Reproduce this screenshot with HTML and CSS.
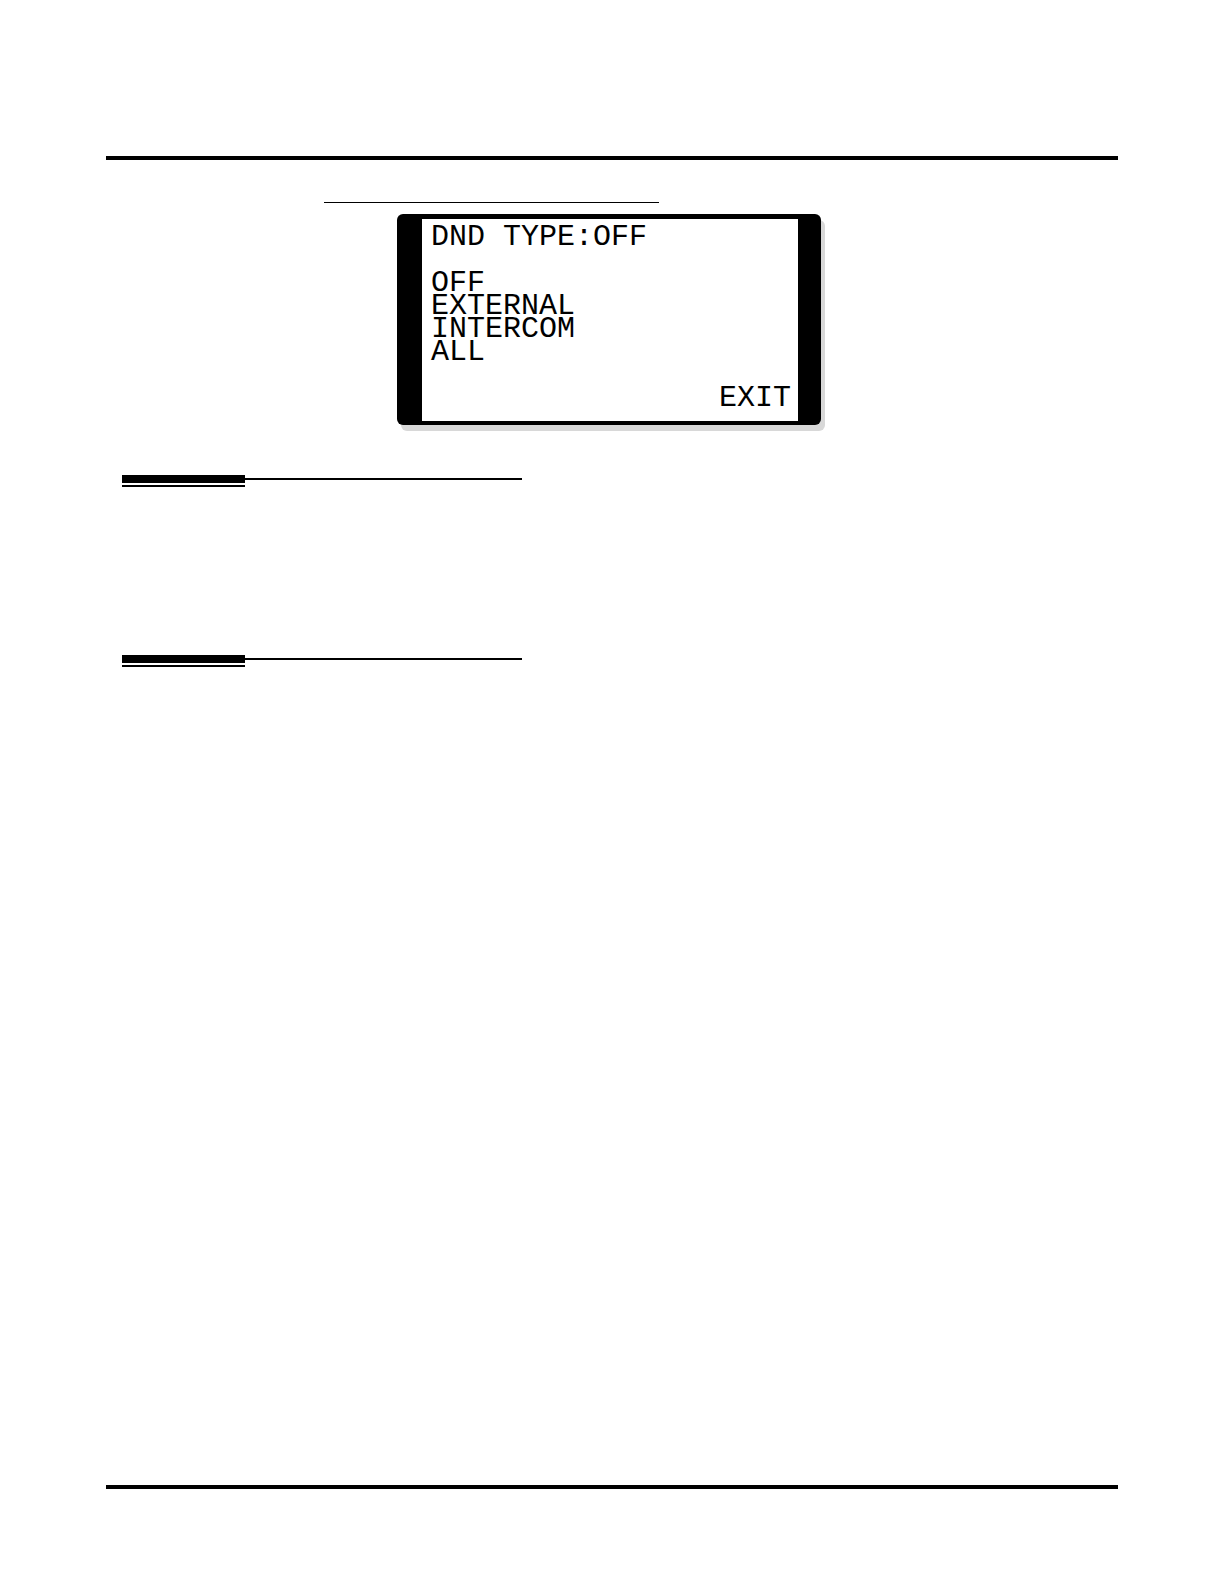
FILE: index.html
```html
<!DOCTYPE html>
<html lang="en">
<head>
    <meta charset="UTF-8">
    <meta name="viewport" content="width=device-width, initial-scale=1.0">
    <title>DND TYPE</title>
    <link rel="stylesheet" href="styles.css">
</head>
<body>
    <header class="page-rule"></header>
    <main class="content">
        <div class="caption-line"></div>
        <section class="device">
            <div class="screen">
                <div class="status">DND TYPE:OFF</div>
                <div class="options">
                    <button type="button">OFF</button>
                    <button type="button">EXTERNAL</button>
                    <button type="button">INTERCOM</button>
                    <button type="button">ALL</button>
                </div>
                <button type="button" class="exit">EXIT</button>
            </div>
        </section>
        <div class="divider">
            <div class="divider-tab"></div>
            <div class="divider-line"></div>
        </div>
        <div class="divider divider-next">
            <div class="divider-tab"></div>
            <div class="divider-line"></div>
        </div>
    </main>
    <footer class="page-rule"></footer>
</body>
</html>
```
FILE: styles.css
```css
:root {
    --ink: #000000;
    --paper: #FFFFFF;
    --shadow: #D8D8D8;
}

* {
    box-sizing: border-box;
}

body {
    display: flex;
    flex-direction: column;
    min-height: 100vh;
    margin: 0;
    padding: 156px 106px 95px;
    background-color: var(--paper);
    color: var(--ink);
    font-family: "Liberation Mono", monospace;
}
.page-rule {
    height: 4px;
    background-color: var(--ink);
}
.content {
    flex: 1;
    padding: 42px 16px;
}
.caption-line {
    max-width: 335px;
    margin-left: 202px;
    border-top: 1px solid var(--ink);
}

/* Telephone display */
.device {
    max-width: 424px;
    margin: 11px 0 0 275px;
    padding: 5px 23px 4px 25px;
    background-color: var(--ink);
    border-radius: 6px;
    box-shadow: 4px 6px 0 var(--shadow);
}
.screen {
    display: flex;
    flex-direction: column;
    padding: 7px 7px 11px 9px;
    background-color: var(--paper);
    font-size: 30px;
    line-height: 23px;
}
.options {
    display: flex;
    flex-direction: column;
    align-items: flex-start;
    margin: 23px 0;
}
button {
    padding: 0;
    border: none;
    background: none;
    color: inherit;
    font: inherit;
    cursor: pointer;
}
.exit {
    align-self: flex-end;
}

/* Section dividers */
.divider {
    display: flex;
    max-width: 400px;
    margin-top: 50px;
}
.divider-next {
    margin-top: 168px;
}
.divider-tab {
    width: 123px;
    height: 12px;
    border-top: 8px solid var(--ink);
    border-bottom: 2px solid var(--ink);
}
.divider-line {
    flex: 1;
    height: 2px;
    margin-top: 3px;
    background-color: var(--ink);
}
```
